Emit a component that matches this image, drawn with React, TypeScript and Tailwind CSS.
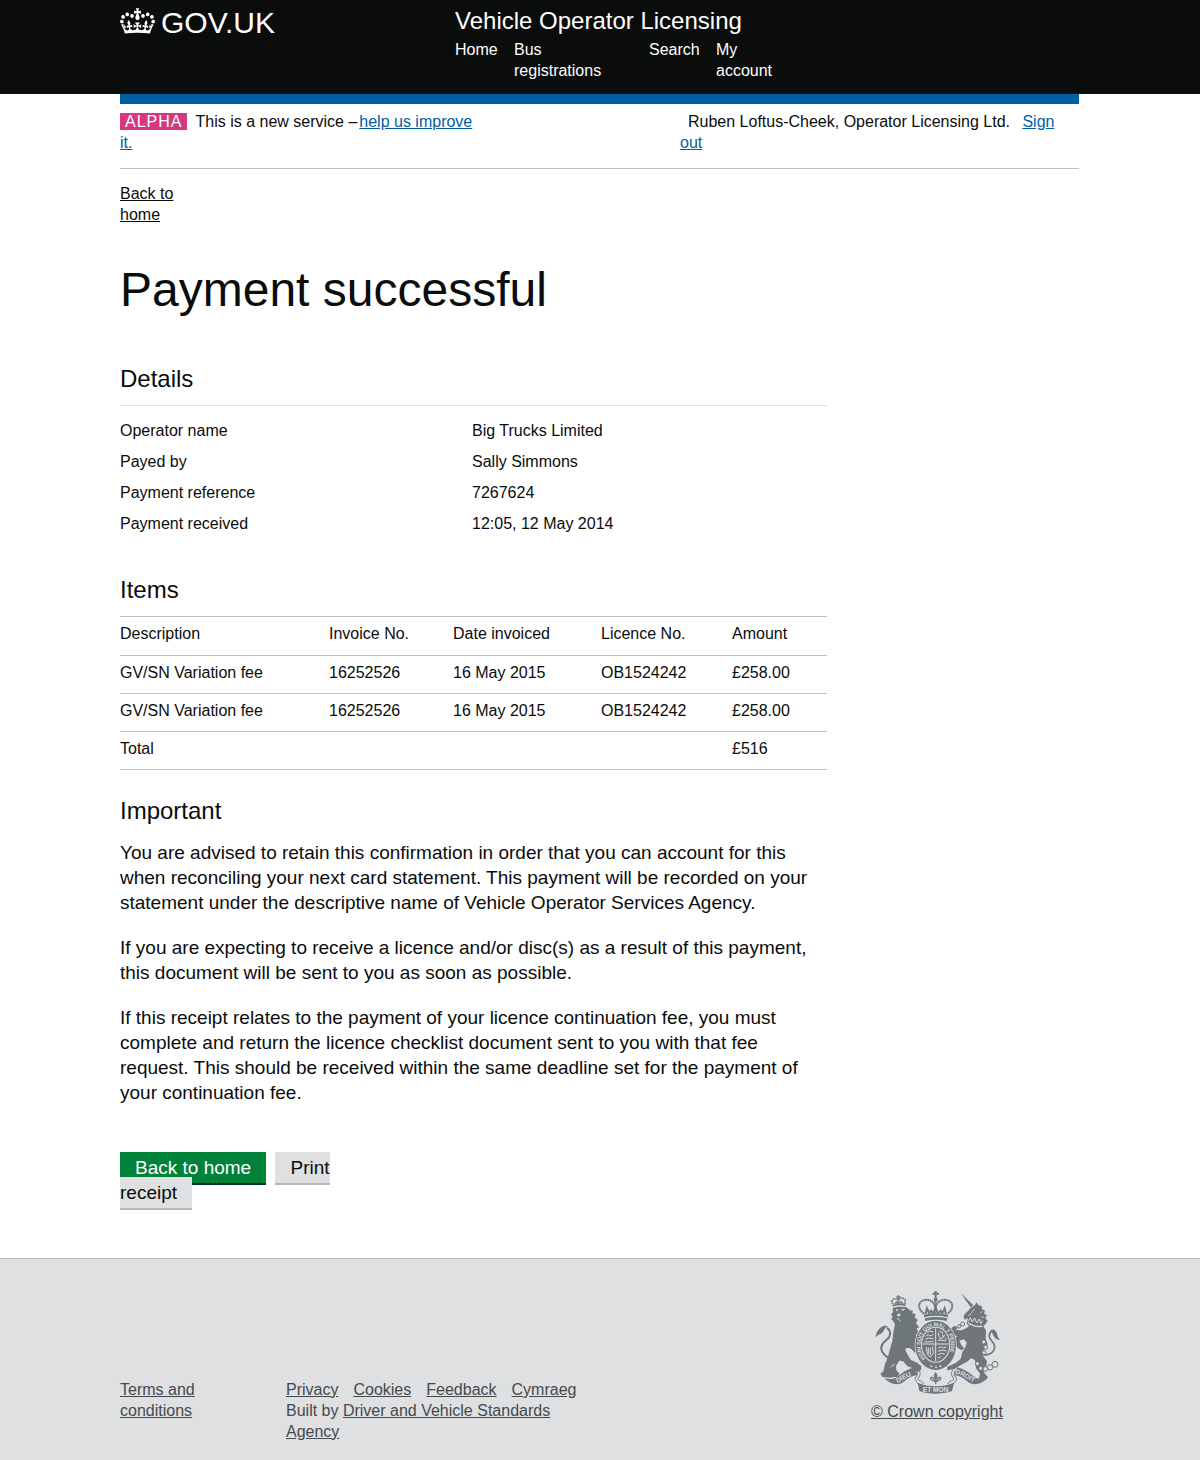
import React from 'react';

const details = [
  ['Operator name', 'Big Trucks Limited'],
  ['Payed by', 'Sally Simmons'],
  ['Payment reference', '7267624'],
  ['Payment received', '12:05, 12 May 2014'],
];

const items = [
  ['GV/SN Variation fee', '16252526', '16 May 2015', 'OB1524242', '£258.00'],
  ['GV/SN Variation fee', '16252526', '16 May 2015', 'OB1524242', '£258.00'],
  ['Total', '', '', '', '£516'],
];

function Crown() {
  return (
    <svg className="h-[26px] w-[35px] shrink-0" viewBox="0 0 132 97" fill="currentColor" aria-hidden="true">
      <path d="M25 30.2c3.5 1.5 7.7-.2 9.1-3.7 1.5-3.6-.2-7.8-3.9-9.2-3.6-1.4-7.6.3-9.1 3.9-1.4 3.5.3 7.5 3.9 9zM9 39.5c3.6 1.5 7.8-.2 9.2-3.7 1.5-3.6-.2-7.8-3.9-9.1-3.6-1.5-7.6.2-9.1 3.8-1.4 3.5.3 7.5 3.8 9zM4.4 57.2c3.5 1.5 7.7-.2 9.1-3.8 1.5-3.6-.2-7.7-3.9-9.1-3.5-1.5-7.6.3-9.1 3.8-1.4 3.5.3 7.6 3.9 9.1zm38.3-21.4c3.5 1.5 7.7-.2 9.1-3.8 1.5-3.6-.2-7.7-3.9-9.1-3.6-1.5-7.6.3-9.1 3.8-1.3 3.6.4 7.7 3.9 9.1zm64.4-5.6c-3.6 1.5-7.8-.2-9.1-3.7-1.5-3.6.2-7.8 3.8-9.2 3.6-1.4 7.7.3 9.2 3.9 1.3 3.5-.4 7.5-3.9 9zm15.9 9.3c-3.6 1.5-7.7-.2-9.1-3.7-1.5-3.6.2-7.8 3.7-9.1 3.6-1.5 7.7.2 9.2 3.8 1.5 3.5-.3 7.5-3.8 9zm4.7 17.7c-3.6 1.5-7.8-.2-9.2-3.8-1.5-3.6.2-7.7 3.9-9.1 3.6-1.5 7.7.3 9.2 3.8 1.3 3.5-.4 7.6-3.9 9.1zM89.3 35.8c-3.6 1.5-7.8-.2-9.2-3.8-1.4-3.6.2-7.7 3.9-9.1 3.6-1.5 7.7.3 9.2 3.8 1.4 3.6-.3 7.7-3.9 9.1zM69.7 17.7l8.9 4.7V9.3l-8.9 2.8c-.2-.3-.5-.6-.9-.9L72.4 0H59.6l3.5 11.2c-.3.3-.6.5-.9.9l-8.8-2.8v13.1l8.8-4.7c.3.3.6.7.9.9l-5 15.4v.1c-.2.8-.4 1.6-.4 2.4 0 4.1 3.1 7.5 7 8.1h.2c.3 0 .7.1 1 .1.4 0 .7 0 1-.1h.2c4-.6 7.1-4.1 7.1-8.1 0-.8-.1-1.7-.4-2.4V34l-5.1-15.4c.4-.2.7-.6 1-.9zM66 92.8c16.9 0 32.8 1.1 47.1 3.2 4-16.9 8.9-26.7 14-33.5l-9.6-3.4c1 4.9 1.1 7.2 0 10.2-1.5-1.4-3-4.3-4.2-8.7L108.6 76c2.8-2 5-3.2 7.5-3.3-4.4 9.4-10 11.9-13.6 11.2-4.3-.8-6.3-4.6-5.6-7.9 1-4.7 5.7-5.9 8-.5 4.3-8.7-3-11.4-7.6-8.8 7.1-7.2 7.9-13.5 2.1-21.1-8 6.1-8.1 12.3-4.5 20.8-4.7-5.4-12.1-2.5-9.5 6.2 3.4-5.2 7.9-2 7.2 3.1-.6 4.3-6.4 7.8-13.5 7.2-10.3-.9-10.9-8-11.2-13.8 2.5-.5 7.1 1.8 11 7.3L80.2 60c-4.1 4.4-8 5.3-12.3 5.4 1.4-4.4 8-11.6 8-11.6H55.5s6.4 7.2 7.9 11.6c-4.2-.1-8-1-12.3-5.4l1.4 16.4c3.9-5.5 8.5-7.7 10.9-7.3-.3 5.8-.9 12.8-11.1 13.8-7.2.6-12.9-2.9-13.5-7.2-.7-5 3.8-8.3 7.1-3.1 2.7-8.7-4.6-11.6-9.4-6.2 3.7-8.5 3.6-14.7-4.6-20.8-5.8 7.6-5 13.9 2.2 21.1-4.7-2.6-11.9.1-7.7 8.8 2.3-5.5 7.1-4.2 8.1.5.7 3.3-1.3 7.1-5.7 7.9-3.5.7-9-1.8-13.5-11.2 2.5.1 4.7 1.3 7.5 3.3l-4.7-15.4c-1.2 4.4-2.7 7.2-4.3 8.7-1.1-3-.9-5.3 0-10.2l-9.5 3.4c5 6.9 9.9 16.7 14 33.5 14.8-2.1 30.8-3.2 47.7-3.2z" />
    </svg>
  );
}

function RoyalArms() {
  const ink = '#6f777b';
  const paper = '#dee0e2';
  return (
    <svg className="h-[104px] w-[125px]" viewBox="30 30 375 312" fill={ink} aria-hidden="true">
      {/* lion's tail */}
      <path d="M82 240C62 232 47 216 49 201C51 185 66 182 73 170C78 160 75 148 66 144" fill="none" stroke={ink} strokeWidth="6" />
      <path d="M30 174C33 166 34 157 40 150C47 139 59 134 69 139C60 142 59 148 55 154C48 165 38 162 30 174Z" />
      {/* lion */}
      <path d="M83 84L99 80L123 81L137 92L143 89L142 100L152 102L149 112L158 120L153 130L163 142L155 145L160 158L153 164L154 177L170 196L174 211L165 218L154 208L150 220L140 208L126 203L122 212L128 224L138 240L154 247L169 258L168 270L158 276L147 266L127 258L114 244L103 242L93 258L94 271L104 282L97 290L72 293L52 291L46 281L55 274L60 252L68 233L74 211L82 183L85 157L90 133L83 121L79 119L83 108L77 105L84 97Z" strokeLinejoin="round" />
      <path d="M93 87l9 3-8 4zM109 88l13-2-9 7zM100 100l8 4-6 6-7-5z" fill={paper} />
      <path d="M96 114l10 9M120 208l14-3 12 12M78 262l10-10" fill="none" stroke={paper} strokeWidth="3" />
      {/* lion's crown */}
      <g fill="none" stroke={ink}>
        <path d="M85 78l-5-15 7-7 13 2 13-5 8 7-1 17" strokeWidth="5" strokeDasharray="4 2" />
        <path d="M84 77q18-7 36-2M100 46v23M94 51h13" strokeWidth="5" />
        <path d="M89 72l6-6 6 7 7-8 7 7" strokeWidth="4" />
      </g>
      {/* central crown */}
      <g fill="none" stroke={ink}>
        <path d="M212 33v25M203 41h19" strokeWidth="6" />
        <path d="M178 101C160 90 156 70 173 62C190 54 209 64 211 85C214 64 234 54 251 62C268 70 264 90 247 101" strokeWidth="6" strokeDasharray="6 1" />
        <path d="M211 65v37" strokeWidth="6" strokeDasharray="5 1" />
        <path d="M177 108q35-9 72 0M180 119q33-8 66 0" strokeWidth="8" />
        <path d="M182 102l4-17 7 15 5-8 7 9 7-19 7 19 8-9 5 8 7-15 4 17" strokeWidth="6" />
      </g>
      <circle cx="212" cy="59" r="6" />
      {/* unicorn's tail */}
      <path d="M340 220C357 229 381 226 388 207C394 190 376 183 373 171C371 157 382 147 389 154" fill="none" stroke={ink} strokeWidth="5" />
      <path d="M375 154C387 145 397 156 397 165C397 170 402 175 405 180C393 179 388 174 385 166C383 160 380 157 375 154Z" />
      {/* unicorn */}
      <path d="M287 39L325 76L317 82Z" />
      <path d="M316 85L330 75L334 67L341 76L350 78L351 87L360 92L357 101L366 106L361 115L368 122L362 132L355 138L363 152L362 176L368 193L363 205L353 213L354 228L366 244L364 258L354 263L358 279L369 292L361 301L341 300L345 281L333 264L330 241L319 234L305 246L286 256L267 268L246 271L247 260L272 249L287 236L292 216L301 202L305 188L297 178L283 182L289 195L298 205L289 211L272 199L265 180L276 169L261 162L259 145L268 137L279 143L273 150L290 151L305 144L312 137L305 131L309 114L300 119L295 110L300 101L309 93Z" />
      <path d="M309 107l8-4 8-13 5-3M352 94l-8 6M358 110l-10 3" fill="none" stroke={paper} strokeWidth="2" />
      {/* coronet round the unicorn's neck */}
      <path d="M309 128q19 14 43 11" fill="none" stroke={paper} strokeWidth="4" />
      <path d="M311 124l5-11 6 13 7-12 6 15 8-12 4 14 6-9" fill="none" stroke={paper} strokeWidth="3" />
      {/* unicorn's chain */}
      <g fill={paper} stroke={ink} strokeWidth="3">
        <circle cx="293" cy="132" r="6" />
        <circle cx="282" cy="139" r="5" />
        <circle cx="356" cy="186" r="6" />
        <circle cx="362" cy="202" r="6" />
        <circle cx="357" cy="218" r="6" />
        <circle cx="337" cy="251" r="6" />
        <circle cx="347" cy="265" r="6" />
        <circle cx="361" cy="267" r="7" />
        <circle cx="375" cy="262" r="8" />
        <circle cx="390" cy="253" r="9" />
      </g>
      {/* garter */}
      <ellipse cx="212" cy="196" rx="63" ry="76" fill={paper} />
      <ellipse cx="212" cy="196" rx="61" ry="74" />
      <ellipse cx="212" cy="194" rx="44" ry="54" fill={paper} />
      <path id="garter-line" d="M181 236A46 56 0 1 1 243 236" fill="none" />
      <text fill={paper} fontFamily="Liberation Sans, sans-serif" fontSize="16" fontWeight="700">
        <textPath href="#garter-line">HONI SOIT QUI MAL Y PENSE</textPath>
      </text>
      {/* quartered shield */}
      <ellipse cx="212" cy="194" rx="41" ry="51" />
      <path d="M212 145v98M172 192h80" stroke={paper} strokeWidth="3" />
      <g fill="none" stroke={paper} strokeWidth="3">
        <path d="M182 169l8-5 6 4 9-4M181 178l10-4 15 3M187 158l7-5 11 3M178 186l27-1" />
        <path d="M220 158q0 12 7 19l14-12M219 180l24 2M223 154l12 5M232 162l4 11M239 173l6 6" />
        <path d="M184 202l3 22 9 7 9-11-2-21M190 203v20M196 203v22" />
        <path d="M220 204l9-4 6 4 9-4M219 214l12-4 13 3M219 224l10-4 10 3M219 234l9-4" />
      </g>
      <g fill={paper}>
        <circle cx="199" cy="259" r="3" />
        <circle cx="213" cy="262" r="3" />
        <circle cx="226" cy="259" r="3" />
      </g>
      {/* motto ribbon */}
      <path d="M58 294C80 300 92 296 105 284C117 273 133 267 148 262L158 285C142 287 129 294 119 303C102 318 78 316 58 294Z" />
      <path d="M367 294C345 300 333 296 320 284C308 273 292 267 277 262L266 285C283 287 296 294 306 303C323 318 347 316 367 294Z" />
      <path d="M158 308C190 322 234 322 267 308L261 333C230 344 192 344 163 333Z" />
      <path d="M150 272C166 276 151 290 150 298C153 306 164 310 166 331M176 312C172 301 163 304 158 298C163 289 171 279 160 270M275 272C259 276 274 290 275 298C272 306 261 310 259 331M249 312C253 301 262 304 267 298C262 289 254 279 265 270" fill="none" stroke={ink} strokeWidth="3" />
      <path id="ribbon-left" d="M97 309C113 303 122 291 154 283" fill="none" />
      <path id="ribbon-right" d="M270 281C296 287 305 298 332 309" fill="none" />
      <g fill={paper} fontFamily="Liberation Sans, sans-serif" fontSize="20" fontWeight="700">
        <text><textPath href="#ribbon-left">DIEU</textPath></text>
        <text><textPath href="#ribbon-right">DROIT</textPath></text>
        <text x="212" y="335" textAnchor="middle">ET MON</text>
      </g>
      {/* fleur-de-lis */}
      <path d="M212 276Q224 289 212 301Q200 289 212 276Z" />
      <path d="M209 306q-1-15-11-14-4 8 6 9M215 306q1-15 11-14 4 8-6 9M203 302h18M212 300v13" fill="none" stroke={ink} strokeWidth="4" />
    </svg>
  );
}

function Container({ className = '', children }: { className?: string; children: React.ReactNode }) {
  return <div className={`mx-auto w-full max-w-[960px] pr-px ${className}`}>{children}</div>;
}

export default function App() {
  return (
    <div className="bg-white font-['Liberation_Sans',Arial,sans-serif] text-base leading-[21px] text-[#0b0c0c]">
      <header className="bg-[#0b0c0c] text-white">
        <Container className="flex pt-1.5 pb-[13px]">
          <div className="w-[335px]">
            <a href="#" className="flex items-start gap-1.5 pt-0.5">
              <Crown />
              <span className="text-[30px] leading-[30px]">GOV.UK</span>
            </a>
          </div>
          <div className="flex-1">
            <a href="#" className="block text-2xl leading-[30px]">Vehicle Operator Licensing</a>
            <nav className="mt-[3px] grid grid-cols-[59px_135px_67px_1fr]" aria-label="Main">
              <a href="#">Home</a>
              <a href="#" className="max-w-24">Bus registrations</a>
              <a href="#">Search</a>
              <a href="#" className="max-w-16">My account</a>
            </nav>
          </div>
        </Container>
      </header>

      <Container>
        <div className="h-2.5 bg-[#005ea5]" />
        <div className="flex justify-between border-b border-[#bfc1c3] pt-[7px] pb-[15px]">
          <p className="max-w-[360px]">
            <strong className="mr-2 inline-block bg-[#d53880] px-[5px] leading-[17px] font-normal tracking-[1px] text-white">ALPHA</strong>
            This is a new service –<a href="#" className="ml-0.5 text-[#005ea5] underline">help us improve it.</a>
          </p>
          <p className="w-[399px] pr-4">
            <span className="mx-2">Ruben Loftus-Cheek, Operator Licensing Ltd.</span>{' '}
            <a href="#" className="text-[#005ea5] underline">Sign out</a>
          </p>
        </div>

        <main>
          <a href="#" className="mt-3.5 block max-w-20 underline">Back to home</a>
          <h1 className="mt-10 text-5xl leading-[50px]">Payment successful</h1>

          <div className="max-w-[707px]">
            <h2 className="mt-[49px] border-b border-[#dee0e2] pb-[11px] text-2xl leading-[30px]">Details</h2>
            <dl className="pt-[9px]">
              {details.map(([term, value]) => (
                <div key={term} className="flex py-[5px]">
                  <dt className="w-[352px]">{term}</dt>
                  <dd className="flex-1">{value}</dd>
                </div>
              ))}
            </dl>

            <h2 className="mt-9 text-2xl leading-[30px]">Items</h2>
            <table className="mt-[11px] w-full table-fixed border-t border-[#bfc1c3] text-left">
              <colgroup>
                <col className="w-[209px]" />
                <col className="w-[124px]" />
                <col className="w-[148px]" />
                <col className="w-[131px]" />
                <col />
              </colgroup>
              <thead>
                <tr className="border-b border-[#bfc1c3]">
                  {['Description', 'Invoice No.', 'Date invoiced', 'Licence No.', 'Amount'].map((h) => (
                    <th key={h} scope="col" className="pt-1.5 pb-[11px] font-normal">{h}</th>
                  ))}
                </tr>
              </thead>
              <tbody>
                {items.map((row, i) => (
                  <tr key={i} className="border-b border-[#bfc1c3]">
                    {row.map((cell, j) => (
                      <td key={j} className="pt-1.5 pb-2.5">{cell}</td>
                    ))}
                  </tr>
                ))}
              </tbody>
            </table>

            <h2 className="mt-[26px] text-2xl leading-[30px]">Important</h2>
            <div className="mt-3.5 space-y-5 text-[19px] leading-[25px]">
              <p>You are advised to retain this confirmation in order that you can account for this when reconciling your next card statement. This payment will be recorded on your statement under the descriptive name of Vehicle Operator Services Agency.</p>
              <p>If you are expecting to receive a licence and/or disc(s) as a result of this payment, this document will be sent to you as soon as possible.</p>
              <p>If this receipt relates to the payment of your licence continuation fee, you must complete and return the licence checklist document sent to you with that fee request. This should be received within the same deadline set for the payment of your continuation fee.</p>
            </div>
          </div>

          <div className="mt-[50px] mb-[53px] max-w-[220px] text-[19px] leading-[25px]">
            <a href="#" role="button" className="mr-1 bg-[#00823b] px-[15px] py-[5px] text-white shadow-[0_2px_0_#003618]">Back to home</a>{' '}
            <a href="#" role="button" className="bg-[#dee0e2] px-[15px] py-[5px] shadow-[0_2px_0_#b1b7bc]">Print receipt</a>
          </div>
        </main>
      </Container>

      <footer className="border-t border-[#bbbec1] bg-[#dee0e2] pt-[31px] pb-[18px] text-[#454a4c]">
        <Container className="flex items-end">
          <div className="w-[166px] pb-[21px]">
            <a href="#" className="block max-w-24 underline">Terms and conditions</a>
          </div>
          <div>
            <nav className="flex gap-[15px]" aria-label="Footer">
              {['Privacy', 'Cookies', 'Feedback', 'Cymraeg'].map((l) => (
                <a key={l} href="#" className="underline">{l}</a>
              ))}
            </nav>
            <p className="max-w-[300px]">
              Built by <a href="#" className="underline">Driver and Vehicle Standards Agency</a>
            </p>
          </div>
          <a href="#" className="ml-auto flex w-[284px] flex-col items-center gap-[7px] pb-5 underline">
            <RoyalArms />
            © Crown copyright
          </a>
        </Container>
      </footer>
    </div>
  );
}
